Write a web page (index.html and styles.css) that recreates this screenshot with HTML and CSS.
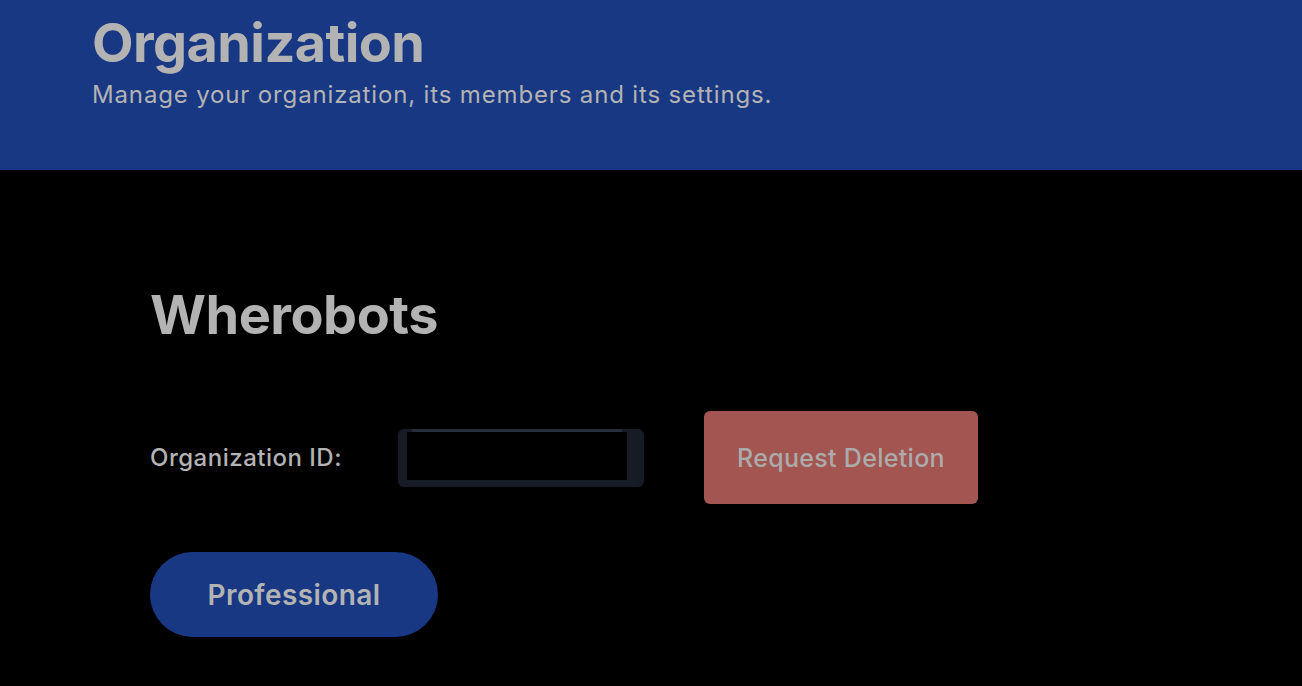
FILE: index.html
```html
<!DOCTYPE html>
<html lang="en">
<head>
<meta charset="utf-8">
<title>Organization</title>
<link rel="stylesheet" href="styles.css">
</head>
<body>
<header class="page-header">
  <h1 class="page-title">Organization</h1>
  <p class="page-subtitle">Manage your organization, its members and its settings.</p>
</header>
<main class="content">
  <h2 class="org-name">Wherobots</h2>
  <div class="id-row">
    <span class="id-label">Organization ID:</span>
    <div class="id-box">
      <div class="id-strip"></div>
      <div class="id-value"></div>
    </div>
    <button class="btn-delete">Request Deletion</button>
  </div>
  <div class="plan-row">
    <span class="plan-pill">Professional</span>
  </div>
</main>
</body>
</html>
```
FILE: styles.css
```css
* { box-sizing: border-box; }
html, body { margin: 0; padding: 0; }
body {
  background: #000;
  color: #b3b3b3;
  font-family: Inter, "DejaVu Sans", sans-serif;
  width: 1302px;
  height: 686px;
  overflow: hidden;
}
.page-header {
  background: #183884;
  height: 170px;
  padding: 13px 0 0 92px;
}
.page-title {
  margin: 0;
  font-size: 54px;
  line-height: 60px;
  font-weight: 700;
  letter-spacing: -0.6px;
  color: #b3b3b3;
}
.page-subtitle {
  margin: 7px 0 0;
  font-size: 24px;
  line-height: 30px;
  font-weight: 400;
  letter-spacing: 0.85px;
  color: #b3b3b3;
}
.content {
  padding: 115px 0 0 150px;
}
.org-name {
  margin: 0;
  font-size: 54px;
  line-height: 60px;
  font-weight: 700;
  letter-spacing: -0.5px;
}
.id-row {
  display: flex;
  align-items: center;
  margin-top: 66px;
}
.id-label {
  width: 248px;
  font-size: 24px;
  font-weight: 500;
  letter-spacing: 0.5px;
}
.id-box {
  width: 246px;
  height: 58px;
  background: #161b26;
  border-radius: 6px;
  padding: 0 17px 7px 9px;
  display: flex;
  flex-direction: column;
}
.id-strip {
  height: 3px;
  margin: 0 5px;
  background: #262e3e;
}
.id-value {
  flex: 1;
  background: #000;
}
.btn-delete {
  margin-left: 60px;
  width: 274px;
  height: 93px;
  border: none;
  border-radius: 6px;
  background: #a35551;
  color: #ababab;
  font-family: inherit;
  font-size: 25px;
  font-weight: 500;
  letter-spacing: 0.3px;
}
.plan-row {
  margin-top: 48px;
  display: flex;
}
.plan-pill {
  display: inline-flex;
  align-items: center;
  justify-content: center;
  width: 288px;
  height: 85px;
  border-radius: 43px;
  background: #183884;
  font-size: 28px;
  font-weight: 600;
  letter-spacing: 0.4px;
  color: #b3b3b3;
}
```
